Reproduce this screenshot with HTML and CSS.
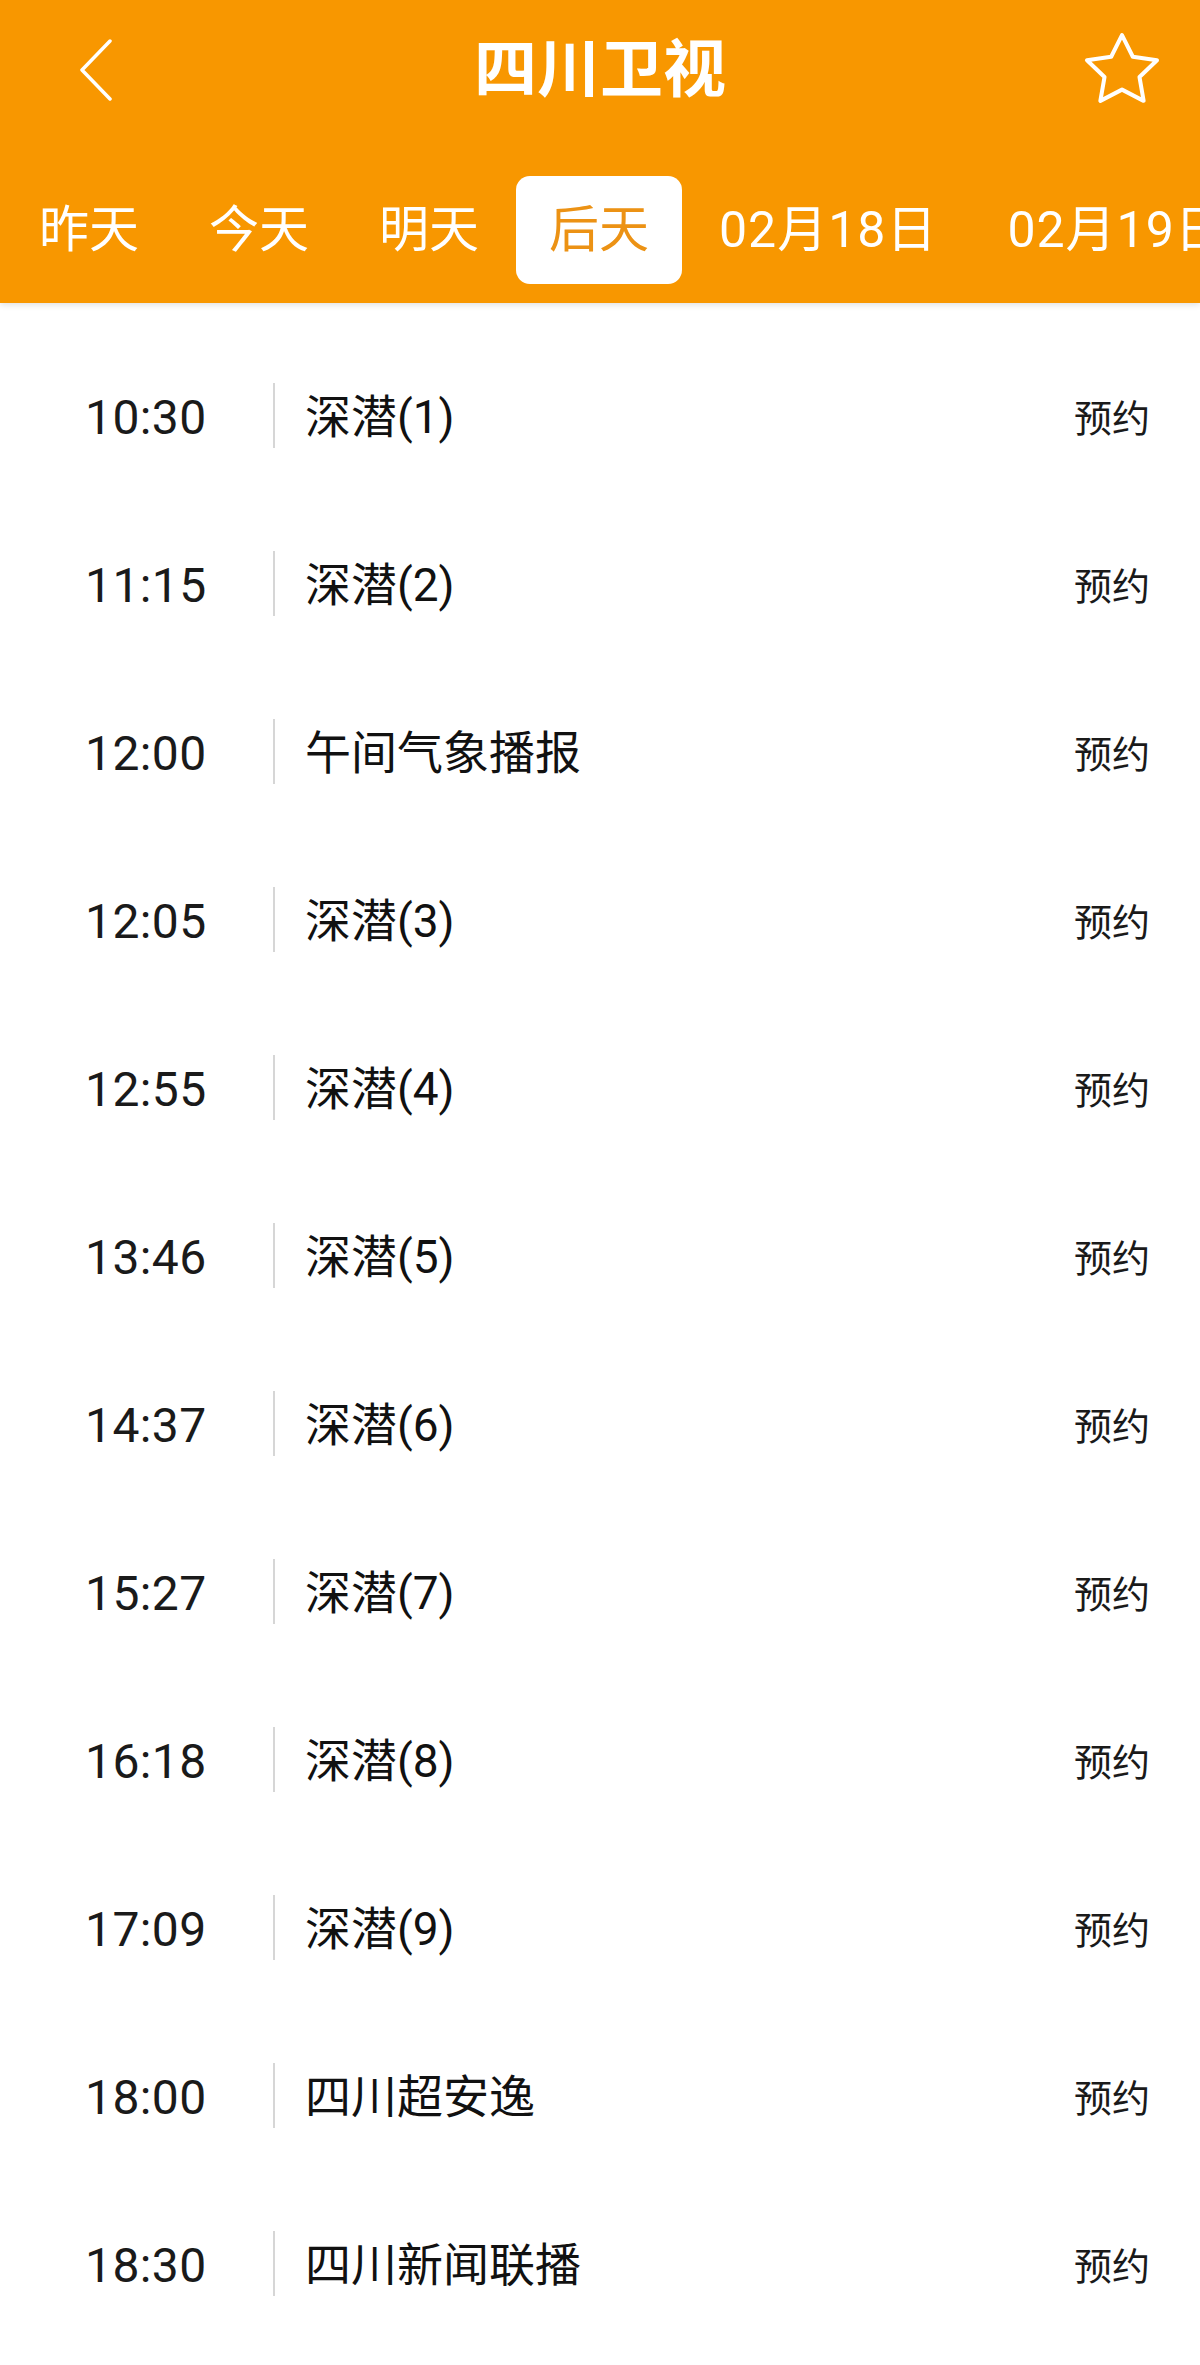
FILE: index.html
```html
<!DOCTYPE html>
<html lang="zh-CN">
<head>
    <meta charset="UTF-8">
    <meta name="viewport" content="width=device-width, initial-scale=1.0">
    <title>四川卫视 节目单</title>
    <link rel="stylesheet" href="styles.css">
</head>
<body>
    <header class="header">
        <div class="topbar">
            <div class="topbar-side">
                <svg class="back-icon" width="40" height="64" viewBox="0 0 40 64">
                    <path d="M32 4 L4 33 L32 62" fill="none" stroke="#fff" stroke-width="3.5" stroke-linecap="round" stroke-linejoin="round"/>
                </svg>
            </div>
            <h1 class="title">四川卫视</h1>
            <div class="topbar-side topbar-right">
                <svg class="star-icon" width="84" height="84" viewBox="0 0 24 24">
                    <polygon points="12 2.3 15.09 8.5 22 9.5 17 14.3 18.18 21.1 12 17.9 5.82 21.1 7 14.3 2 9.5 8.91 8.5" fill="none" stroke="#fff" stroke-width="1.15" stroke-linejoin="round"/>
                </svg>
            </div>
        </div>
        <nav class="tabs">
            <span class="tab">昨天</span>
            <span class="tab">今天</span>
            <span class="tab">明天</span>
            <span class="tab active">后天</span>
            <span class="tab date">02月18日</span>
            <span class="tab date">02月19日</span>
        </nav>
    </header>

    <ul class="schedule">
        <li class="item"><span class="time">10:30</span><span class="name">深潜(1)</span><span class="book">预约</span></li>
        <li class="item"><span class="time">11:15</span><span class="name">深潜(2)</span><span class="book">预约</span></li>
        <li class="item"><span class="time">12:00</span><span class="name">午间气象播报</span><span class="book">预约</span></li>
        <li class="item"><span class="time">12:05</span><span class="name">深潜(3)</span><span class="book">预约</span></li>
        <li class="item"><span class="time">12:55</span><span class="name">深潜(4)</span><span class="book">预约</span></li>
        <li class="item"><span class="time">13:46</span><span class="name">深潜(5)</span><span class="book">预约</span></li>
        <li class="item"><span class="time">14:37</span><span class="name">深潜(6)</span><span class="book">预约</span></li>
        <li class="item"><span class="time">15:27</span><span class="name">深潜(7)</span><span class="book">预约</span></li>
        <li class="item"><span class="time">16:18</span><span class="name">深潜(8)</span><span class="book">预约</span></li>
        <li class="item"><span class="time">17:09</span><span class="name">深潜(9)</span><span class="book">预约</span></li>
        <li class="item"><span class="time">18:00</span><span class="name">四川超安逸</span><span class="book">预约</span></li>
        <li class="item"><span class="time">18:30</span><span class="name">四川新闻联播</span><span class="book">预约</span></li>
    </ul>
</body>
</html>
```

FILE: styles.css
```css
body {
    margin: 0;
    padding: 0;
    background-color: #fff;
    font-family: Roboto, "Noto Sans CJK SC", sans-serif;
    color: #161616;
    overflow: hidden;
}
.header {
    background-color: #f89700;
    box-shadow: 0 2px 6px rgba(0, 0, 0, 0.12);
    padding-bottom: 19px;
}
.topbar {
    height: 138px;
    display: grid;
    grid-template-columns: 200px 1fr 200px;
    align-items: center;
}
.topbar-side {
    display: flex;
    align-items: center;
}
.back-icon {
    margin-left: 78px;
}
.topbar-right {
    justify-content: flex-end;
    padding-right: 36px;
}
.title {
    margin: 0;
    text-align: center;
    color: #fff;
    font-size: 63px;
    font-weight: 700;
    line-height: 1;
}
.tabs {
    display: flex;
    margin-top: 38px;
    padding-left: 4px;
    white-space: nowrap;
    overflow: hidden;
}
.tab {
    height: 108px;
    line-height: 108px;
    margin: 0 2px;
    padding: 0 33px;
    font-size: 50px;
    color: #fff;
    border-radius: 14px;
    flex-shrink: 0;
}
.tab.date {
    letter-spacing: 1px;
}
.tab.active {
    background-color: #fff;
    color: #ec9214;
}
.schedule {
    list-style: none;
    margin: 0;
    padding: 28px 0 0;
}
.item {
    height: 168px;
    display: flex;
    align-items: center;
    padding: 0 50px 0 85px;
}
.time {
    width: 188px;
    padding-top: 5px;
    font-size: 48px;
    color: #1a1a1a;
    letter-spacing: 0.4px;
}
.name {
    flex: 1;
    height: 61px;
    display: flex;
    align-items: center;
    border-left: 2px solid #d6d6d6;
    padding: 0 0 4px 30px;
    font-size: 46px;
    color: #111;
}
.book {
    font-size: 38px;
    color: #1a1a1a;
}
```
